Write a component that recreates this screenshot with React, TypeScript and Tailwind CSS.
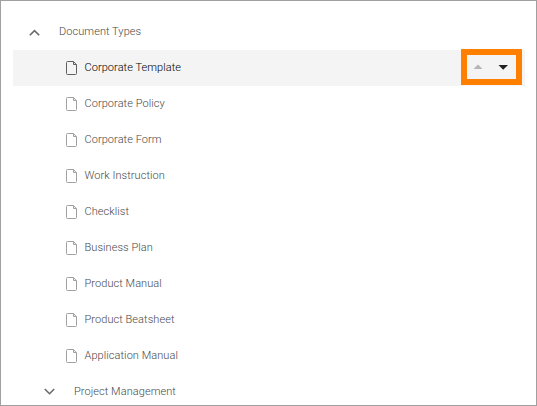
const documentTypes = [
  "Corporate Template",
  "Corporate Policy",
  "Corporate Form",
  "Work Instruction",
  "Checklist",
  "Business Plan",
  "Product Manual",
  "Product Beatsheet",
  "Application Manual",
];

function DocumentIcon({ active }: { active: boolean }) {
  return (
    <svg
      width="12"
      height="14"
      viewBox="0 0 12 14"
      fill="none"
      stroke="currentColor"
      className={`shrink-0 ${active ? "text-[#606060]" : "text-[#a0a0a0]"}`}
    >
      <path d="M1.5 .5H7.5L10.5 3.7V12.5Q10.5 13.5 9.5 13.5H1.5Q.5 13.5 .5 12.5V1.5Q.5 .5 1.5 .5Z" />
      <path d="M7.5 .5V3.5H10.5" />
    </svg>
  );
}

function Chevron({ up = false }: { up?: boolean }) {
  return (
    <svg
      width="12"
      height="8"
      viewBox="0 0 12 8"
      fill="none"
      stroke="#6a6a6a"
      strokeWidth="1.6"
      className="shrink-0"
    >
      <path d={up ? "M.8 7.3L5.5 2.6L10.2 7.3" : "M.8 1L5.5 5.7L10.2 1"} />
    </svg>
  );
}

export default function App() {
  return (
    <main className="h-[406px] w-[537px] overflow-hidden border border-[#a0a0a0] bg-white pt-[13px] pr-[11px] pl-3 font-[Roboto,sans-serif] text-[11px] font-light tracking-[0.06px] text-[#484848]">
      <div className="flex h-9 items-center pl-4">
        <Chevron up />
        <span className="ml-[18px]">Document Types</span>
      </div>
      <ul>
        {documentTypes.map((name, index) => (
          <li
            key={name}
            className={`flex h-9 items-center pl-[53px] ${index === 0 ? "bg-[#f4f4f4] text-black" : ""}`}
          >
            <DocumentIcon active={index === 0} />
            <span className="ml-[6.5px]">{name}</span>
            {index === 0 && (
              <div className="-mt-0.5 mr-[3px] ml-auto flex h-9 w-[61px] items-center border-6 border-[#ff8000] pl-[7px]">
                <svg width="36" height="6" viewBox="0 0 36 6">
                  <path d="M-.5 5L4 .5L8.5 5Z" fill="#b5b5b5" />
                  <path d="M24.5 1H34L29.2 5.7Z" fill="#212121" />
                </svg>
              </div>
            )}
          </li>
        ))}
      </ul>
      <div className="flex h-9 items-center pl-[31px]">
        <Chevron />
        <span className="ml-[18px]">Project Management</span>
      </div>
    </main>
  );
}
